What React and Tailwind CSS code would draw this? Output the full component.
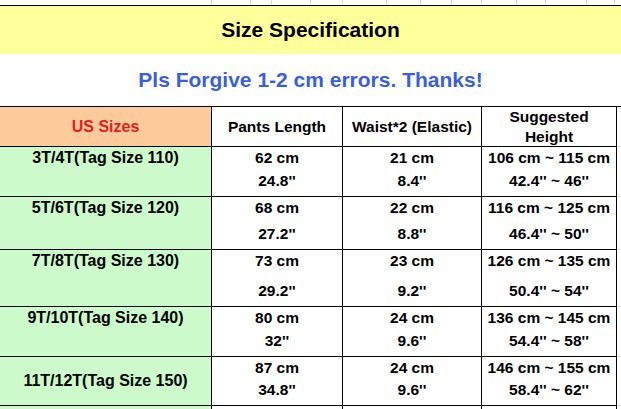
import React from 'react';

const gridTicks = [
  'w-[212px]', 'w-[39px]', 'w-[21px]', 'w-[39px]', 'w-[32px]', 'w-[44px]', 'w-[34px]',
  'w-[31px]', 'w-[30px]', 'w-[35px]', 'w-[29px]', 'w-[41px]', 'w-[28px]',
];

const rows = [
  { size: '3T/4T(Tag Size 110)', h: 'h-[50px]', pants: ['62 cm', "24.8''"], waist: ['21 cm', "8.4''"], height: ['106 cm ~ 115 cm', "42.4'' ~ 46''"] },
  { size: '5T/6T(Tag Size 120)', h: 'h-[53px]', pants: ['68 cm', "27.2''"], waist: ['22 cm', "8.8''"], height: ['116 cm ~ 125 cm', "46.4'' ~ 50''"] },
  { size: '7T/8T(Tag Size 130)', h: 'h-[57px]', pants: ['73 cm', "29.2''"], waist: ['23 cm', "9.2''"], height: ['126 cm ~ 135 cm', "50.4'' ~ 54''"] },
  { size: '9T/10T(Tag Size 140)', h: 'h-[50px]', pants: ['80 cm', "32''"], waist: ['24 cm', "9.6''"], height: ['136 cm ~ 145 cm', "54.4'' ~ 58''"] },
  { size: '11T/12T(Tag Size 150)', h: 'h-[49px]', pants: ['87 cm', "34.8''"], waist: ['24 cm', "9.6''"], height: ['146 cm ~ 155 cm', "58.4'' ~ 62''"], center: true },
];

function ValueCell({ lines }) {
  return (
    <div className="flex flex-col justify-between items-center pb-[4px] border-r border-b border-black bg-white leading-[22px]">
      <span>{lines[0]}</span>
      <span>{lines[1]}</span>
    </div>
  );
}

export default function App() {
  return (
    <div className="w-[621px] h-[409px] overflow-hidden bg-white text-black font-bold" style={{ fontFamily: '"Liberation Sans", Arial, sans-serif' }}>
      {/* spreadsheet gridlines above the sheet */}
      <div className="flex h-[5px]">
        {gridTicks.map((w, i) => (
          <div key={i} className={`${w} border-r border-[#d9d9d9]`} />
        ))}
      </div>

      {/* Title bands */}
      <div className="border-t border-black h-[49px] bg-[#ffff9c] flex items-center justify-center text-[21px]">
        Size Specification
      </div>
      <div className="h-[52px] bg-white flex items-center justify-center text-[21px] text-[#3b5fd8]">
        Pls Forgive 1-2 cm errors. Thanks!
      </div>

      {/* Table */}
      <div className="border-t border-black grid grid-cols-[212px_131px_139px_135px_1fr] text-[15.5px]">
        <div className="h-[40px] bg-[#fcca9b] border-r border-b border-black flex items-center justify-center text-[16px] text-[#e3201b]">
          US Sizes
        </div>
        <div className="h-[40px] border-r border-b border-black flex items-center justify-center">
          Pants Length
        </div>
        <div className="h-[40px] border-r border-b border-black flex items-center justify-center">
          Waist*2 (Elastic)
        </div>
        <div className="h-[40px] border-r border-b border-black flex flex-col items-center justify-center leading-[20px]">
          <span>Suggested</span>
          <span>Height</span>
        </div>
        <div className="h-[40px] border-b border-[#d9d9d9]" />

        {rows.map((r) => (
          <React.Fragment key={r.size}>
            <div className={`${r.h} bg-[#ccfacb] border-r border-b border-black flex justify-center text-[16px] leading-[22px] ${r.center ? 'items-center' : 'items-start'}`}>
              {r.size}
            </div>
            <ValueCell lines={r.pants} />
            <ValueCell lines={r.waist} />
            <ValueCell lines={r.height} />
            <div className="border-b border-[#d9d9d9]" />
          </React.Fragment>
        ))}

        <div className="h-[30px] bg-[#ccfacb] border-r border-black" />
        <div className="h-[30px] border-r border-black" />
        <div className="h-[30px] border-r border-black" />
        <div className="h-[30px] border-r border-black" />
        <div className="h-[30px]" />
      </div>
    </div>
  );
}
